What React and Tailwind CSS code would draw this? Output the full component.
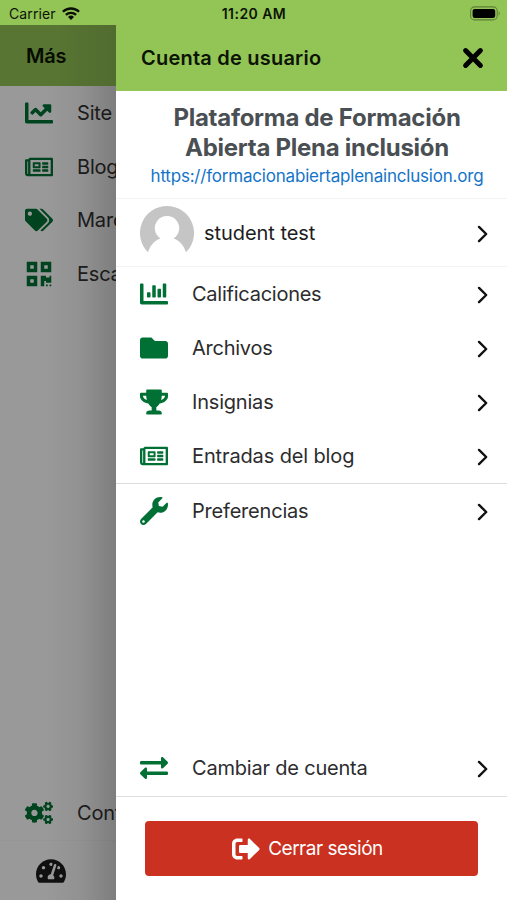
import React from "react";
import {
  FaChartLine, FaRegNewspaper, FaTags, FaQrcode, FaCogs, FaTachometerAlt,
  FaChartBar, FaFolder, FaTrophy, FaWrench, FaExchangeAlt, FaSignOutAlt,
} from "react-icons/fa";

const pageItems = [
  { icon: FaChartLine, label: "Site" },
  { icon: FaRegNewspaper, label: "Blog" },
  { icon: FaTags, label: "Marc" },
  { icon: FaQrcode, label: "Esca" },
];

const accountItems = [
  { icon: FaChartBar, label: "Calificaciones", track: "tracking-[-0.25px]" },
  { icon: FaFolder, label: "Archivos", track: "tracking-[-0.25px]" },
  { icon: FaTrophy, label: "Insignias", track: "tracking-[-0.2px]" },
  { icon: FaRegNewspaper, label: "Entradas del blog", track: "tracking-[-0.13px]" },
];

function Chevron() {
  return (
    <svg viewBox="0 0 12 18" className="mt-[2px] h-[18px] w-3 shrink-0" fill="none" stroke="#111" strokeWidth="2.4">
      <path d="M2 1.9 L9.2 9 L2 16.1" strokeLinecap="round" strokeLinejoin="round" />
    </svg>
  );
}

function PageRow({ icon: Icon, label }) {
  return (
    <div className="flex h-[53.7px] w-full items-center overflow-hidden pl-[25px]">
      <Icon className="h-7 w-7 shrink-0 text-[#007034]" />
      <span className="ml-6 text-[20px] tracking-[-0.2px] text-[#333]">{label}</span>
    </div>
  );
}

function AccountRow({ icon: Icon, label, track }) {
  return (
    <div className="flex h-[54px] shrink-0 items-center pr-[18px] pl-6">
      <Icon className="h-7 w-7 shrink-0 text-[#007034]" />
      <span className={"ml-6 grow text-[20px] text-[#2c2c2e] " + track}>{label}</span>
      <Chevron />
    </div>
  );
}

export default function App() {
  return (
    <div className="flex h-[900px] w-[507px] flex-col overflow-hidden bg-white font-[Inter,sans-serif]">
      <div className="flex h-[25px] shrink-0 items-center justify-between bg-[#93c456] pt-[2px] pr-[6px] pl-[9px] text-[#0c1405]">
        <div className="flex w-[170px] items-center text-[14px] tracking-[0.1px]">
          Carrier
          <svg viewBox="0 0 18 13" className="ml-[6px] h-[13px] w-[18px]" fill="none" stroke="#0a0f05" strokeWidth="2.3">
            <path d="M0.9 4.8 A11.6 11.6 0 0 1 17.1 4.8" />
            <path d="M3.9 7.9 A7.2 7.2 0 0 1 14.1 7.9" />
            <path d="M6 9.9 A4.3 4.3 0 0 1 12 9.9 L9 13 Z" fill="#0a0f05" stroke="none" />
          </svg>
        </div>
        <div className="mr-[2px] text-center text-[14px] font-semibold tracking-[0.45px]">11:20 AM</div>
        <div className="flex w-[170px] justify-end">
          <svg viewBox="0 0 31 15" className="h-[15px] w-[31px] shrink-0">
            <rect x="0.6" y="0.9" width="26.6" height="13" rx="4" fill="none" stroke="#5f8038" strokeWidth="1.1" />
            <rect x="2.6" y="2.9" width="22.6" height="9" rx="2.2" fill="#000" />
            <path d="M28.7 5 Q30.8 7.4 28.7 9.8 Z" fill="#5f8038" />
          </svg>
        </div>
      </div>
      <div className="flex min-h-0 grow">
        <div className="relative flex w-[116px] shrink-0 flex-col overflow-hidden">
          <div className="flex h-[61px] shrink-0 items-center bg-[#93c456] pl-[26px] text-[20px] font-semibold tracking-[-0.2px] text-[#0c1405]">Más</div>
          {pageItems.map((item) => <PageRow key={item.label} {...item} />)}
          <div className="grow" />
          <PageRow icon={FaCogs} label="Conf" />
          <div className="flex h-[60px] shrink-0 items-center border-t border-[#f8f8f8] pl-9">
            <FaTachometerAlt className="h-[30px] w-[30px] text-[#1c1c1c]" />
          </div>
          <div className="absolute inset-0 bg-black/40" />
          <div className="absolute top-0 right-0 h-[61px] w-[60px] bg-linear-to-r from-black/0 to-black/8" />
          <div className="absolute top-[61px] right-0 bottom-0 w-[70px] bg-linear-to-r from-black/0 via-black/5 to-black/18" />
        </div>
        <div className="flex grow flex-col bg-white">
          <div className="flex h-[66px] shrink-0 items-center bg-[#93c456] pr-[23px] pl-[25px] text-[#0c1405]">
            <h1 className="grow text-[20px] font-semibold tracking-[0.22px]">Cuenta de usuario</h1>
            <svg viewBox="0 0 22 22" className="h-[22px] w-[22px]" stroke="#000" strokeWidth="5" strokeLinecap="round">
              <path d="M3.6 3.6 L18.4 18.4 M18.4 3.6 L3.6 18.4" />
            </svg>
          </div>
          <div className="h-[108px] shrink-0 border-b border-[#f3f3f3] pt-3 pl-[11px] text-center">
            <h2 className="text-[24px] leading-[30px] font-bold tracking-[-0.27px] text-[#4a4f54]">
              Plataforma de Formación<br />Abierta Plena inclusión
            </h2>
            <a className="block text-[17px] leading-[27px] tracking-[-0.2px] text-[#1474c8]">https://formacionabiertaplenainclusion.org</a>
          </div>
          <div className="flex h-[68px] shrink-0 items-center border-b border-[#f3f3f3] pr-[18px] pl-6">
            <svg viewBox="0 0 54 54" className="h-[54px] w-[54px] shrink-0">
              <path d="M27 0 A27 27 0 0 1 46 46.2 C43.5 39 39.5 34.5 33.5 32.5 A12.2 12.2 0 1 0 20.5 32.5 C14.5 34.5 10.5 39 8 46.2 A27 27 0 0 1 27 0 Z" fill="#c5c5c5" />
            </svg>
            <span className="mt-px ml-[10px] grow text-[20px] tracking-[-0.05px] text-[#1c1c1e]">student test</span>
            <Chevron />
          </div>
          {accountItems.map((item) => <AccountRow key={item.label} {...item} />)}
          <div className="border-t border-[#dcdcdc]">
            <AccountRow icon={FaWrench} label="Preferencias" track="tracking-[-0.2px]" />
          </div>
          <div className="grow" />
          <AccountRow icon={FaExchangeAlt} label="Cambiar de cuenta" track="tracking-[-0.2px]" />
          <div className="mt-px h-[104px] shrink-0 border-t border-[#dcdfdf] px-[29px] pt-6">
            <button className="flex h-[55px] w-full items-center justify-center gap-[8px] rounded-[4px] bg-[#ca3120] pr-2 text-[19px] tracking-[-0.5px] text-white">
              <FaSignOutAlt className="h-7 w-7" />
              <span className="mt-[2px]">Cerrar sesión</span>
            </button>
          </div>
        </div>
      </div>
    </div>
  );
}
